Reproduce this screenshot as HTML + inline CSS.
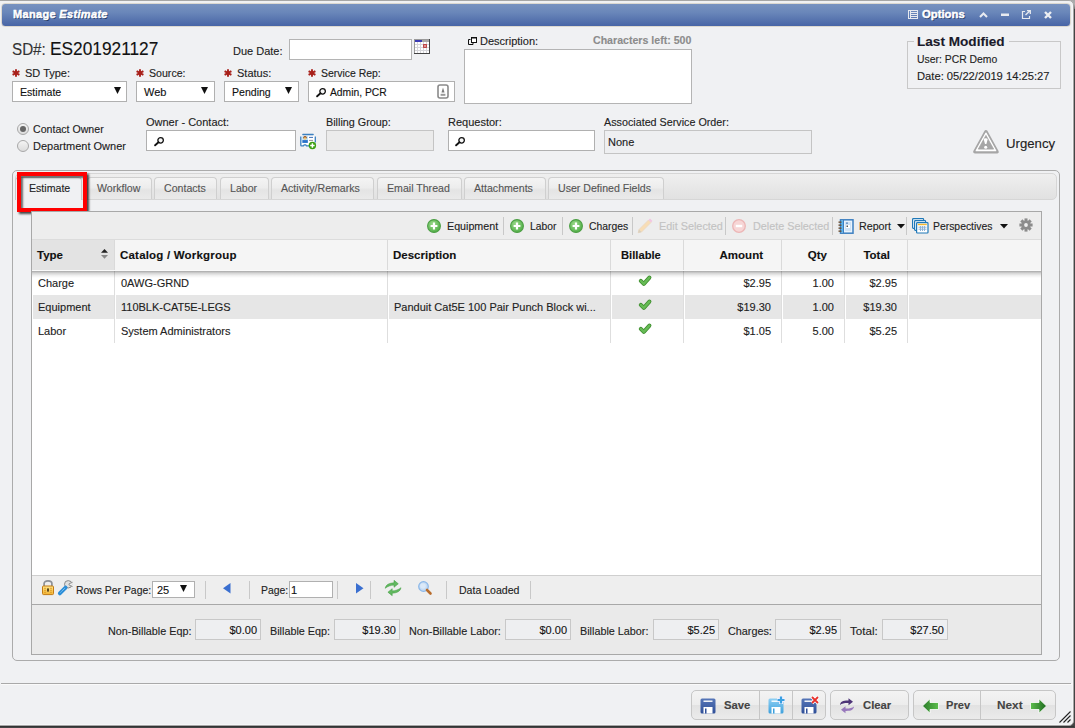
<!DOCTYPE html>
<html><head><meta charset="utf-8"><title>Manage Estimate</title>
<style>
*{margin:0;padding:0;box-sizing:border-box}
html,body{width:1075px;height:728px;overflow:hidden;background:#454545;font-family:"Liberation Sans", sans-serif}
.a{position:absolute}
.t{white-space:nowrap;-webkit-text-stroke:0.12px currentColor}
svg{position:absolute;overflow:visible}
</style></head>
<body>
<div class="a" style="left:1066px;top:0px;width:9px;height:12px;background:linear-gradient(#a9a9a9, #b0b0b0 35%, #444 100%)"></div>
<div class="a" style="left:-6px;top:0px;width:1080px;height:726px;background:#f0f1f3;border:1px solid #a6a6a6;border-radius:5px;box-shadow:inset -1px -1px 0 #f6f7f8"></div>
<div class="a" style="left:0px;top:726px;width:1075px;height:1px;background:#333"></div>
<div class="a" style="left:1074px;top:9px;width:1px;height:719px;background:#444"></div>
<div class="a" style="left:1px;top:3px;width:1070px;height:24px;border-radius:4px;background:linear-gradient(#7892c0,#6986b9 40%,#4865a6);border:1px solid #dcd8d0"></div>
<div class="a t" style="left:13px;top:4px;font-size:11px;line-height:20px;color:#fff;font-weight:bold;text-shadow:1px 1px 0.5px #223a66;letter-spacing:0.33px;-webkit-text-stroke:0.45px #fff;">Manage <i>Estimate</i></div>
<div class="a t" style="left:12px;top:40px;font-size:16px;line-height:20px;color:#333;transform:scaleX(0.95);transform-origin:0 0;">SD#:</div>
<div class="a t" style="left:50px;top:39px;font-size:19px;line-height:20px;color:#111;transform:scaleX(0.91);transform-origin:0 0;">ES201921127</div>
<div class="a t" style="left:233px;top:41px;font-size:11px;line-height:20px;color:#222;">Due Date:</div>
<div class="a" style="left:289px;top:39px;width:123px;height:21px;background:#fff;border:1px solid #b4b4b4"></div>
<svg style="left:12px;top:69px" width="8" height="8" viewBox="0 0 8 8"><path d="M4 0.3V7.7M0.6 2.1L7.4 5.9M0.6 5.9L7.4 2.1" stroke="#a8201a" stroke-width="1.9"/></svg>
<div class="a t" style="left:25px;top:63px;font-size:11px;line-height:20px;color:#222;">SD Type:</div>
<svg style="left:136px;top:69px" width="8" height="8" viewBox="0 0 8 8"><path d="M4 0.3V7.7M0.6 2.1L7.4 5.9M0.6 5.9L7.4 2.1" stroke="#a8201a" stroke-width="1.9"/></svg>
<div class="a t" style="left:149px;top:63px;font-size:10.6px;line-height:20px;color:#222;">Source:</div>
<svg style="left:224px;top:69px" width="8" height="8" viewBox="0 0 8 8"><path d="M4 0.3V7.7M0.6 2.1L7.4 5.9M0.6 5.9L7.4 2.1" stroke="#a8201a" stroke-width="1.9"/></svg>
<div class="a t" style="left:237px;top:63px;font-size:11px;line-height:20px;color:#222;">Status:</div>
<svg style="left:308px;top:69px" width="8" height="8" viewBox="0 0 8 8"><path d="M4 0.3V7.7M0.6 2.1L7.4 5.9M0.6 5.9L7.4 2.1" stroke="#a8201a" stroke-width="1.9"/></svg>
<div class="a t" style="left:321px;top:64px;font-size:10.45px;line-height:20px;color:#222;">Service Rep:</div>
<div class="a" style="left:12px;top:81px;width:115px;height:21px;background:#fff;border:1px solid #b0b0b0"></div>
<div class="a t" style="left:20px;top:82px;font-size:10.6px;line-height:20px;color:#111;">Estimate</div>
<div class="a" style="left:136px;top:81px;width:79px;height:21px;background:#fff;border:1px solid #b0b0b0"></div>
<div class="a t" style="left:144px;top:82px;font-size:11px;line-height:20px;color:#111;">Web</div>
<div class="a" style="left:224px;top:81px;width:75px;height:21px;background:#fff;border:1px solid #b0b0b0"></div>
<div class="a t" style="left:232px;top:82px;font-size:10.55px;line-height:20px;color:#111;">Pending</div>
<svg style="left:114px;top:87px" width="7" height="7"><path d="M0 0H7L3.5 7Z" fill="#111"/></svg>
<svg style="left:201px;top:87px" width="7" height="7"><path d="M0 0H7L3.5 7Z" fill="#111"/></svg>
<svg style="left:285px;top:87px" width="7" height="7"><path d="M0 0H7L3.5 7Z" fill="#111"/></svg>
<div class="a" style="left:308px;top:81px;width:147px;height:21px;background:#fff;border:1px solid #b0b0b0"></div>
<div class="a t" style="left:330px;top:83px;font-size:10.3px;line-height:20px;color:#111;">Admin, PCR</div>
<div class="a t" style="left:480px;top:31px;font-size:11px;line-height:20px;color:#222;">Description:</div>
<div class="a t" style="left:593px;top:30px;font-size:10.6px;line-height:20px;color:#8c8c8c;font-weight:bold;">Characters left: 500</div>
<div class="a" style="left:464px;top:49px;width:228px;height:55px;background:#fff;border:1px solid #b4b4b4"></div>
<div class="a" style="left:907px;top:41px;width:154px;height:48px;border:1px solid #c8c8c8"></div>
<div class="a" style="left:914px;top:34px;width:95px;height:12px;background:#f0f1f3"></div>
<div class="a t" style="left:917px;top:32px;font-size:13.6px;line-height:20px;color:#1a1a2a;font-weight:bold;">Last Modified</div>
<div class="a t" style="left:917px;top:50px;font-size:10.4px;line-height:20px;color:#222;">User: PCR Demo</div>
<div class="a t" style="left:917px;top:66px;font-size:11.2px;line-height:20px;color:#222;">Date: 05/22/2019 14:25:27</div>
<div class="a" style="left:17px;top:123px;width:12px;height:12px;border-radius:50%;border:1px solid #a8a8a8;background:linear-gradient(#f4f4f4,#dcdcdc)"></div>
<div class="a" style="left:17px;top:140px;width:12px;height:12px;border-radius:50%;border:1px solid #a8a8a8;background:linear-gradient(#f4f4f4,#dcdcdc)"></div>
<div class="a" style="left:20px;top:126px;width:6px;height:6px;border-radius:50%;background:#666"></div>
<div class="a t" style="left:33px;top:119px;font-size:10.6px;line-height:20px;color:#222;">Contact Owner</div>
<div class="a t" style="left:33px;top:136px;font-size:11px;line-height:20px;color:#222;">Department Owner</div>
<div class="a t" style="left:146px;top:112px;font-size:11px;line-height:20px;color:#222;">Owner - Contact:</div>
<div class="a" style="left:146px;top:130px;width:150px;height:21px;background:#fff;border:1px solid #b0b0b0"></div>
<div class="a t" style="left:326px;top:112px;font-size:10.8px;line-height:20px;color:#222;">Billing Group:</div>
<div class="a" style="left:326px;top:130px;width:108px;height:21px;background:#ebebeb;border:1px solid #c4c4c4"></div>
<div class="a t" style="left:448px;top:112px;font-size:11px;line-height:20px;color:#222;">Requestor:</div>
<div class="a" style="left:448px;top:130px;width:147px;height:21px;background:#fff;border:1px solid #b0b0b0"></div>
<div class="a t" style="left:604px;top:112px;font-size:10.75px;line-height:20px;color:#222;">Associated Service Order:</div>
<div class="a" style="left:604px;top:130px;width:208px;height:24px;background:#eeeff1;border:1px solid #c4c4c4"></div>
<div class="a t" style="left:608px;top:132px;font-size:11px;line-height:20px;color:#222;">None</div>
<div class="a t" style="left:1006px;top:134px;font-size:13.2px;line-height:20px;color:#222;">Urgency</div>
<div class="a" style="left:12px;top:170px;width:1048px;height:491px;border:1px solid #ababab;border-radius:5px"></div>
<div class="a" style="left:15px;top:173px;width:1042px;height:27px;border:1px solid #d6d6d6;border-radius:5px;background:linear-gradient(#efefef,#e1e1e1)"></div>
<div class="a" style="left:15px;top:177px;width:67px;height:23px;background:#f0f1f3;border:1px solid #c8c8c8;border-bottom:none;border-radius:4px 4px 0 0"></div>
<div class="a t" style="left:29px;top:178px;font-size:10.6px;line-height:20px;color:#222;">Estimate</div>
<div class="a" style="left:87px;top:177px;width:65px;height:22px;background:linear-gradient(#f4f4f4,#ededed 45%,#e4e4e4 58%,#eaeaea);border:1px solid #cfcfcf;border-bottom:none;border-radius:4px 4px 0 0"></div>
<div class="a t" style="left:97px;top:178px;font-size:10.6px;line-height:20px;color:#555;">Workflow</div>
<div class="a" style="left:154px;top:177px;width:63px;height:22px;background:linear-gradient(#f4f4f4,#ededed 45%,#e4e4e4 58%,#eaeaea);border:1px solid #cfcfcf;border-bottom:none;border-radius:4px 4px 0 0"></div>
<div class="a t" style="left:164px;top:178px;font-size:10.6px;line-height:20px;color:#555;">Contacts</div>
<div class="a" style="left:220px;top:177px;width:49px;height:22px;background:linear-gradient(#f4f4f4,#ededed 45%,#e4e4e4 58%,#eaeaea);border:1px solid #cfcfcf;border-bottom:none;border-radius:4px 4px 0 0"></div>
<div class="a t" style="left:230px;top:178px;font-size:10.6px;line-height:20px;color:#555;">Labor</div>
<div class="a" style="left:271px;top:177px;width:103px;height:22px;background:linear-gradient(#f4f4f4,#ededed 45%,#e4e4e4 58%,#eaeaea);border:1px solid #cfcfcf;border-bottom:none;border-radius:4px 4px 0 0"></div>
<div class="a t" style="left:281px;top:178px;font-size:10.6px;line-height:20px;color:#555;">Activity/Remarks</div>
<div class="a" style="left:377px;top:177px;width:85px;height:22px;background:linear-gradient(#f4f4f4,#ededed 45%,#e4e4e4 58%,#eaeaea);border:1px solid #cfcfcf;border-bottom:none;border-radius:4px 4px 0 0"></div>
<div class="a t" style="left:387px;top:178px;font-size:10.6px;line-height:20px;color:#555;">Email Thread</div>
<div class="a" style="left:464px;top:177px;width:82px;height:22px;background:linear-gradient(#f4f4f4,#ededed 45%,#e4e4e4 58%,#eaeaea);border:1px solid #cfcfcf;border-bottom:none;border-radius:4px 4px 0 0"></div>
<div class="a t" style="left:474px;top:178px;font-size:10.6px;line-height:20px;color:#555;">Attachments</div>
<div class="a" style="left:548px;top:177px;width:116px;height:22px;background:linear-gradient(#f4f4f4,#ededed 45%,#e4e4e4 58%,#eaeaea);border:1px solid #cfcfcf;border-bottom:none;border-radius:4px 4px 0 0"></div>
<div class="a t" style="left:558px;top:178px;font-size:10.6px;line-height:20px;color:#555;">User Defined Fields</div>
<div class="a" style="left:31px;top:211px;width:1011px;height:1px;background:#a8a8a8"></div>
<div class="a" style="left:17px;top:172px;width:70px;height:40px;border:4px solid #f00;box-shadow:2px 2px 2px rgba(0,0,0,.7), inset 2px 2px 2px rgba(0,0,0,.55)"></div>
<div class="a" style="left:31px;top:211px;width:1011px;height:444px;border:1px solid #a8a8a8;border-top:1px solid #a8a8a8;background:#fff"></div>
<div class="a" style="left:32px;top:212px;width:1009px;height:28px;background:#ededed"></div>
<div class="a" style="left:32px;top:239px;width:1009px;height:1px;background:#dcdcdc"></div>
<div class="a t" style="left:447px;top:216px;font-size:10.7px;line-height:20px;color:#222;">Equipment</div>
<div class="a t" style="left:530px;top:217px;font-size:10.3px;line-height:20px;color:#222;">Labor</div>
<div class="a t" style="left:589px;top:217px;font-size:10.35px;line-height:20px;color:#222;">Charges</div>
<div class="a t" style="left:659px;top:216px;font-size:10.85px;line-height:20px;color:#c2c2c2;">Edit Selected</div>
<div class="a t" style="left:753px;top:216px;font-size:10.8px;line-height:20px;color:#c2c2c2;">Delete Selected</div>
<div class="a t" style="left:859px;top:216px;font-size:10.7px;line-height:20px;color:#222;">Report</div>
<div class="a t" style="left:933px;top:217px;font-size:10.4px;line-height:20px;color:#222;">Perspectives</div>
<div class="a" style="left:503px;top:217px;width:1px;height:18px;background:#c8c8c8"></div>
<div class="a" style="left:562px;top:217px;width:1px;height:18px;background:#c8c8c8"></div>
<div class="a" style="left:632px;top:217px;width:1px;height:18px;background:#c8c8c8"></div>
<div class="a" style="left:725px;top:217px;width:1px;height:18px;background:#c8c8c8"></div>
<div class="a" style="left:832px;top:217px;width:1px;height:18px;background:#c8c8c8"></div>
<div class="a" style="left:906px;top:217px;width:1px;height:18px;background:#c8c8c8"></div>
<svg style="left:427px;top:219px" width="15" height="15" viewBox="0 0 15 15"><defs><radialGradient id="pg427" cx="0.4" cy="0.35" r="0.7"><stop offset="0" stop-color="#9ad88a"/><stop offset="1" stop-color="#4fae45"/></radialGradient></defs><circle cx="7" cy="7" r="6.4" fill="url(#pg427)" stroke="#4c9e44" stroke-width="1.1"/><path d="M7 3.6V10.4M3.6 7H10.4" stroke="#fff" stroke-width="2.2"/></svg>
<svg style="left:510px;top:219px" width="15" height="15" viewBox="0 0 15 15"><defs><radialGradient id="pg510" cx="0.4" cy="0.35" r="0.7"><stop offset="0" stop-color="#9ad88a"/><stop offset="1" stop-color="#4fae45"/></radialGradient></defs><circle cx="7" cy="7" r="6.4" fill="url(#pg510)" stroke="#4c9e44" stroke-width="1.1"/><path d="M7 3.6V10.4M3.6 7H10.4" stroke="#fff" stroke-width="2.2"/></svg>
<svg style="left:569px;top:219px" width="15" height="15" viewBox="0 0 15 15"><defs><radialGradient id="pg569" cx="0.4" cy="0.35" r="0.7"><stop offset="0" stop-color="#9ad88a"/><stop offset="1" stop-color="#4fae45"/></radialGradient></defs><circle cx="7" cy="7" r="6.4" fill="url(#pg569)" stroke="#4c9e44" stroke-width="1.1"/><path d="M7 3.6V10.4M3.6 7H10.4" stroke="#fff" stroke-width="2.2"/></svg>
<svg style="left:732px;top:219px" width="15" height="15"><circle cx="7" cy="7" r="6.3" fill="#f7d6d6" stroke="#ecb6b6" stroke-width="1.3"/><path d="M3.8 7H10.2" stroke="#fff" stroke-width="2.4"/></svg>
<svg style="left:897px;top:224px" width="8" height="5"><path d="M0 0H8L4 4.5Z" fill="#111"/></svg>
<svg style="left:1000px;top:224px" width="8" height="5"><path d="M0 0H8L4 4.5Z" fill="#111"/></svg>
<div class="a" style="left:32px;top:240px;width:1009px;height:31px;background:#f5f5f5"></div>
<div class="a" style="left:32px;top:240px;width:83px;height:31px;background:#e3e3e3"></div>
<div class="a" style="left:114px;top:240px;width:1px;height:31px;background:#dadada"></div>
<div class="a" style="left:387px;top:240px;width:1px;height:31px;background:#dadada"></div>
<div class="a" style="left:610px;top:240px;width:1px;height:31px;background:#dadada"></div>
<div class="a" style="left:683px;top:240px;width:1px;height:31px;background:#dadada"></div>
<div class="a" style="left:781px;top:240px;width:1px;height:31px;background:#dadada"></div>
<div class="a" style="left:844px;top:240px;width:1px;height:31px;background:#dadada"></div>
<div class="a" style="left:907px;top:240px;width:1px;height:31px;background:#dadada"></div>
<div class="a t" style="left:37px;top:245px;font-size:11.5px;line-height:20px;color:#111;font-weight:bold;">Type</div>
<div class="a t" style="left:120px;top:245px;font-size:11.5px;line-height:20px;color:#111;font-weight:bold;letter-spacing:0.2px;">Catalog / Workgroup</div>
<div class="a t" style="left:393px;top:245px;font-size:11.5px;line-height:20px;color:#111;font-weight:bold;">Description</div>
<div class="a t" style="left:621px;top:245px;font-size:11.2px;line-height:20px;color:#111;font-weight:bold;">Billable</div>
<div class="a t" style="left:683px;top:245px;width:80px;text-align:right;font-size:11.5px;line-height:20px;color:#111;font-weight:bold;">Amount</div>
<div class="a t" style="left:787px;top:245px;width:40px;text-align:right;font-size:11.5px;line-height:20px;color:#111;font-weight:bold;">Qty</div>
<div class="a t" style="left:850px;top:245px;width:40px;text-align:right;font-size:11.5px;line-height:20px;color:#111;font-weight:bold;">Total</div>
<div class="a t" style="left:38px;top:273px;font-size:11px;line-height:20px;color:#222;">Charge</div>
<div class="a t" style="left:121px;top:273px;font-size:11px;line-height:20px;color:#222;">0AWG-GRND</div>
<div class="a t" style="left:394px;top:273px;font-size:11px;line-height:20px;color:#222;"></div>
<div class="a t" style="left:691px;top:273px;width:80px;text-align:right;font-size:11px;line-height:20px;color:#222;">$2.95</div>
<div class="a t" style="left:794px;top:273px;width:40px;text-align:right;font-size:11px;line-height:20px;color:#222;">1.00</div>
<div class="a t" style="left:837px;top:273px;width:60px;text-align:right;font-size:11px;line-height:20px;color:#222;">$2.95</div>
<div class="a" style="left:33px;top:295px;width:81px;height:24px;background:#e6e6e6"></div>
<div class="a" style="left:116px;top:295px;width:271px;height:24px;background:#e6e6e6"></div>
<div class="a" style="left:389px;top:295px;width:221px;height:24px;background:#e6e6e6"></div>
<div class="a" style="left:612px;top:295px;width:71px;height:24px;background:#e6e6e6"></div>
<div class="a" style="left:685px;top:295px;width:96px;height:24px;background:#e6e6e6"></div>
<div class="a" style="left:783px;top:295px;width:61px;height:24px;background:#e6e6e6"></div>
<div class="a" style="left:846px;top:295px;width:61px;height:24px;background:#e6e6e6"></div>
<div class="a" style="left:909px;top:295px;width:132px;height:24px;background:#e6e6e6"></div>
<div class="a t" style="left:38px;top:297px;font-size:11px;line-height:20px;color:#222;">Equipment</div>
<div class="a t" style="left:121px;top:297px;font-size:11px;line-height:20px;color:#222;">110BLK-CAT5E-LEGS</div>
<div class="a t" style="left:394px;top:297px;font-size:11px;line-height:20px;color:#222;">Panduit Cat5E 100 Pair Punch Block wi...</div>
<div class="a t" style="left:691px;top:297px;width:80px;text-align:right;font-size:11px;line-height:20px;color:#222;">$19.30</div>
<div class="a t" style="left:794px;top:297px;width:40px;text-align:right;font-size:11px;line-height:20px;color:#222;">1.00</div>
<div class="a t" style="left:837px;top:297px;width:60px;text-align:right;font-size:11px;line-height:20px;color:#222;">$19.30</div>
<div class="a t" style="left:38px;top:321px;font-size:11px;line-height:20px;color:#222;">Labor</div>
<div class="a t" style="left:121px;top:321px;font-size:11px;line-height:20px;color:#222;">System Administrators</div>
<div class="a t" style="left:394px;top:321px;font-size:11px;line-height:20px;color:#222;"></div>
<div class="a t" style="left:691px;top:321px;width:80px;text-align:right;font-size:11px;line-height:20px;color:#222;">$1.05</div>
<div class="a t" style="left:794px;top:321px;width:40px;text-align:right;font-size:11px;line-height:20px;color:#222;">5.00</div>
<div class="a t" style="left:837px;top:321px;width:60px;text-align:right;font-size:11px;line-height:20px;color:#222;">$5.25</div>
<div class="a" style="left:114px;top:271px;width:1px;height:72px;background:#dedede"></div>
<div class="a" style="left:387px;top:271px;width:1px;height:72px;background:#dedede"></div>
<div class="a" style="left:610px;top:271px;width:1px;height:72px;background:#dedede"></div>
<div class="a" style="left:683px;top:271px;width:1px;height:72px;background:#dedede"></div>
<div class="a" style="left:781px;top:271px;width:1px;height:72px;background:#dedede"></div>
<div class="a" style="left:844px;top:271px;width:1px;height:72px;background:#dedede"></div>
<div class="a" style="left:907px;top:271px;width:1px;height:72px;background:#dedede"></div>
<div class="a" style="left:32px;top:270px;width:1009px;height:1px;background:#fafafa"></div>
<div class="a" style="left:32px;top:271px;width:1009px;height:7px;background:linear-gradient(rgba(0,0,0,.34), rgba(0,0,0,.17) 30%, rgba(0,0,0,.06) 65%, rgba(0,0,0,0))"></div>
<div class="a" style="left:32px;top:575px;width:1009px;height:30px;background:#eeeeee;border-top:1px solid #cfcfcf;border-bottom:1px solid #a8a8a8"></div>
<div class="a t" style="left:76px;top:581px;font-size:10.4px;line-height:20px;color:#222;">Rows Per Page:</div>
<div class="a" style="left:152px;top:581px;width:43px;height:17px;background:#fff;border:1px solid #b0b0b0"></div>
<div class="a t" style="left:157px;top:580px;font-size:11px;line-height:20px;color:#111;">25</div>
<svg style="left:180px;top:585px" width="7" height="7"><path d="M0 0H7L3.5 7Z" fill="#111"/></svg>
<div class="a" style="left:205px;top:581px;width:1px;height:18px;background:#c8c8c8"></div>
<div class="a" style="left:249px;top:581px;width:1px;height:18px;background:#c8c8c8"></div>
<div class="a" style="left:337px;top:581px;width:1px;height:18px;background:#c8c8c8"></div>
<div class="a" style="left:370px;top:581px;width:1px;height:18px;background:#c8c8c8"></div>
<div class="a" style="left:446px;top:581px;width:1px;height:18px;background:#c8c8c8"></div>
<div class="a" style="left:530px;top:581px;width:1px;height:18px;background:#c8c8c8"></div>
<div class="a t" style="left:261px;top:581px;font-size:10.4px;line-height:20px;color:#222;">Page:</div>
<div class="a" style="left:289px;top:581px;width:44px;height:17px;background:#fff;border:1px solid #b0b0b0"></div>
<div class="a t" style="left:291px;top:580px;font-size:11px;line-height:20px;color:#111;">1</div>
<div class="a t" style="left:459px;top:580px;font-size:10.55px;line-height:20px;color:#222;">Data Loaded</div>
<svg style="left:223px;top:583px" width="8" height="11"><path d="M7.5 0V10.5L0 5.25Z" fill="#3a6fd0"/></svg>
<svg style="left:356px;top:583px" width="8" height="11"><path d="M0 0V10.5L7.5 5.25Z" fill="#3a6fd0"/></svg>
<div class="a" style="left:32px;top:605px;width:1009px;height:49px;background:#eaeaea"></div>
<div class="a t" style="left:108px;top:621px;font-size:10.8px;line-height:20px;color:#222;">Non-Billable Eqp:</div>
<div class="a" style="left:195px;top:619px;width:66px;height:21px;background:#eeeff1;border:1px solid #c8c8c8"></div>
<div class="a t" style="left:197px;top:620px;width:60px;text-align:right;font-size:11px;line-height:20px;color:#111;">$0.00</div>
<div class="a t" style="left:270px;top:621px;font-size:10.8px;line-height:20px;color:#222;">Billable Eqp:</div>
<div class="a" style="left:334px;top:619px;width:66px;height:21px;background:#eeeff1;border:1px solid #c8c8c8"></div>
<div class="a t" style="left:336px;top:620px;width:60px;text-align:right;font-size:11px;line-height:20px;color:#111;">$19.30</div>
<div class="a t" style="left:409px;top:621px;font-size:10.8px;line-height:20px;color:#222;">Non-Billable Labor:</div>
<div class="a" style="left:505px;top:619px;width:66px;height:21px;background:#eeeff1;border:1px solid #c8c8c8"></div>
<div class="a t" style="left:507px;top:620px;width:60px;text-align:right;font-size:11px;line-height:20px;color:#111;">$0.00</div>
<div class="a t" style="left:580px;top:621px;font-size:10.8px;line-height:20px;color:#222;">Billable Labor:</div>
<div class="a" style="left:653px;top:619px;width:66px;height:21px;background:#eeeff1;border:1px solid #c8c8c8"></div>
<div class="a t" style="left:655px;top:620px;width:60px;text-align:right;font-size:11px;line-height:20px;color:#111;">$5.25</div>
<div class="a t" style="left:728px;top:621px;font-size:10.8px;line-height:20px;color:#222;">Charges:</div>
<div class="a" style="left:775px;top:619px;width:66px;height:21px;background:#eeeff1;border:1px solid #c8c8c8"></div>
<div class="a t" style="left:777px;top:620px;width:60px;text-align:right;font-size:11px;line-height:20px;color:#111;">$2.95</div>
<div class="a t" style="left:850px;top:621px;font-size:11.6px;line-height:20px;color:#222;">Total:</div>
<div class="a" style="left:882px;top:619px;width:66px;height:21px;background:#eeeff1;border:1px solid #c8c8c8"></div>
<div class="a t" style="left:884px;top:620px;width:60px;text-align:right;font-size:11px;line-height:20px;color:#111;">$27.50</div>
<div class="a" style="left:1px;top:683px;width:1070px;height:1px;background:#a9a9a9"></div>
<div class="a" style="left:1px;top:684px;width:1071px;height:1px;background:#fafafa"></div>
<div class="a" style="left:691px;top:690px;width:135px;height:30px;border:1px solid #c6c6c6;border-radius:5px;background:linear-gradient(#f3f3f3 0%,#ececec 50%,#e2e2e2 51%,#ebebeb 100%)"></div>
<div class="a" style="left:759px;top:691px;width:1px;height:28px;background:#c6c6c6"></div>
<div class="a" style="left:792px;top:691px;width:1px;height:28px;background:#c6c6c6"></div>
<div class="a" style="left:830px;top:690px;width:79px;height:30px;border:1px solid #c6c6c6;border-radius:5px;background:linear-gradient(#f3f3f3 0%,#ececec 50%,#e2e2e2 51%,#ebebeb 100%)"></div>
<div class="a" style="left:913px;top:690px;width:143px;height:30px;border:1px solid #c6c6c6;border-radius:5px;background:linear-gradient(#f3f3f3 0%,#ececec 50%,#e2e2e2 51%,#ebebeb 100%)"></div>
<div class="a" style="left:980px;top:691px;width:1px;height:28px;background:#c6c6c6"></div>
<div class="a t" style="left:724px;top:695px;font-size:11.3px;line-height:20px;color:#444;font-weight:bold;">Save</div>
<div class="a t" style="left:863px;top:695px;font-size:11.3px;line-height:20px;color:#444;font-weight:bold;">Clear</div>
<div class="a t" style="left:946px;top:695px;font-size:11.1px;line-height:20px;color:#444;font-weight:bold;">Prev</div>
<div class="a t" style="left:997px;top:695px;font-size:11.8px;line-height:20px;color:#444;font-weight:bold;">Next</div>
<div class="a t" style="left:922px;top:4px;font-size:11.3px;line-height:20px;color:#fff;font-weight:bold;text-shadow:1px 1px 0.5px #223a66;-webkit-text-stroke:0.45px #fff;">Options</div>
<svg style="left:908px;top:10px;" width="10" height="9" viewBox="0 0 10 9"><rect x="0.5" y="0.5" width="9" height="8" fill="none" stroke="#e6e9ef"/><path d="M2.5 1V8M3 2.5H9M3 4.5H9M3 6.5H9" stroke="#e6e9ef" stroke-width="1"/></svg>
<svg style="left:979px;top:12px;" width="9" height="6" viewBox="0 0 9 6"><path d="M1 5L4.5 1.5L8 5" stroke="#e8ebf0" stroke-width="2" fill="none"/></svg>
<svg style="left:1001px;top:13px;" width="8" height="4" viewBox="0 0 8 4"><rect x="0" y="0.5" width="8" height="2.5" fill="#e8ebf0"/></svg>
<svg style="left:1021px;top:10px;" width="10" height="9" viewBox="0 0 10 9"><path d="M4 1.5H1.5V8.5H8.5V6" stroke="#e8ebf0" stroke-width="1.2" fill="none"/><path d="M4.5 5L9 0.8M6 0.7H9.3V4" stroke="#e8ebf0" stroke-width="1.3" fill="none"/></svg>
<svg style="left:1044px;top:11px;" width="8" height="8" viewBox="0 0 8 8"><path d="M1 1L7 7M7 1L1 7" stroke="#eceef2" stroke-width="2.4"/></svg>
<svg style="left:414px;top:39px;" width="16" height="15" viewBox="0 0 16 15"><rect x="0" y="0" width="16" height="15" fill="#d4d4d8"/><rect x="0" y="0" width="15" height="14" fill="#9a9a9a"/><rect x="1" y="1" width="14" height="13" fill="#d6d6da"/><rect x="1" y="1" width="7" height="2" fill="#3b3bb5"/><rect x="8" y="1" width="7" height="2" fill="#a8a8a8"/><rect x="1" y="3" width="2" height="2" fill="#fff"/><rect x="1" y="6" width="2" height="2" fill="#fff"/><rect x="1" y="9" width="2" height="2" fill="#fff"/><rect x="1" y="12" width="2" height="2" fill="#fff"/><rect x="4" y="3" width="2" height="2" fill="#fff"/><rect x="4" y="6" width="2" height="2" fill="#fff"/><rect x="4" y="9" width="2" height="2" fill="#fff"/><rect x="4" y="12" width="2" height="2" fill="#fff"/><rect x="7" y="3" width="2" height="2" fill="#fff"/><rect x="7" y="6" width="2" height="2" fill="#fff"/><rect x="7" y="9" width="2" height="2" fill="#fff"/><rect x="7" y="12" width="2" height="2" fill="#fff"/><rect x="10" y="3" width="2" height="2" fill="#fff"/><rect x="10" y="6" width="2" height="2" fill="#fff"/><rect x="10" y="9" width="2" height="2" fill="#fff"/><rect x="10" y="12" width="2" height="2" fill="#fff"/><rect x="13" y="3" width="2" height="2" fill="#fff"/><rect x="13" y="6" width="2" height="2" fill="#fff"/><rect x="13" y="9" width="2" height="2" fill="#fff"/><rect x="13" y="12" width="2" height="2" fill="#fff"/><rect x="9.7" y="5.7" width="2.6" height="2.6" fill="#fff" stroke="#b33" stroke-width="1.2"/><rect x="15" y="0" width="1" height="15" fill="#444"/><rect x="0" y="14" width="16" height="1" fill="#444"/></svg>
<svg style="left:316px;top:87px;" width="11" height="10" viewBox="0 0 11 10"><circle cx="6.6" cy="4.3" r="2.75" fill="#f6f6f6" stroke="#111" stroke-width="1.3"/><path d="M1.1 9.3L4.5 6.3" stroke="#111" stroke-width="1.9" stroke-linecap="round"/></svg>
<svg style="left:154px;top:136px;" width="11" height="10" viewBox="0 0 11 10"><circle cx="6.6" cy="4.3" r="2.75" fill="#f6f6f6" stroke="#111" stroke-width="1.3"/><path d="M1.1 9.3L4.5 6.3" stroke="#111" stroke-width="1.9" stroke-linecap="round"/></svg>
<svg style="left:455px;top:136px;" width="11" height="10" viewBox="0 0 11 10"><circle cx="6.6" cy="4.3" r="2.75" fill="#f6f6f6" stroke="#111" stroke-width="1.3"/><path d="M1.1 9.3L4.5 6.3" stroke="#111" stroke-width="1.9" stroke-linecap="round"/></svg>
<svg style="left:437px;top:84px;" width="12" height="15" viewBox="0 0 12 15"><rect x="1" y="1" width="10" height="13" rx="2" fill="#fff" stroke="#8a8a8a" stroke-width="1.6"/><path d="M6 3.5L7.5 8.5H4.5Z" fill="#7a7a7a"/><rect x="3.6" y="9.8" width="4.8" height="2" fill="#9a9a9a"/></svg>
<svg style="left:468px;top:37px;" width="9" height="8" viewBox="0 0 9 8"><path d="M2.5 2.5H0.5V7.5H5V6" stroke="#111" stroke-width="1" fill="none"/><rect x="3.5" y="0.5" width="5" height="5" fill="#fff" stroke="#111" stroke-width="1"/><rect x="3" y="0" width="6" height="1.5" fill="#111"/></svg>
<svg style="left:300px;top:133px;" width="17" height="17" viewBox="0 0 17 17"><rect x="1.4" y="3" width="13.4" height="9.6" fill="#fff"/><rect x="2.2" y="0.8" width="11.6" height="1.4" rx="0.7" fill="#3a80c0"/><path d="M0.8 3.4V12.3Q0.8 12.9 1.5 12.9H3.4L4.2 11.9H5.7L6.5 12.9H9.5M15.3 3.4V9.5" stroke="#3a80c0" stroke-width="1.3" fill="none"/><rect x="2.2" y="3.1" width="5.8" height="6.8" fill="#bfe3fa"/><circle cx="5" cy="4.6" r="1.7" fill="#9a4a10"/><ellipse cx="5" cy="5.5" rx="1.2" ry="1.3" fill="#f2c878"/><rect x="2.4" y="7.1" width="5.4" height="2.8" fill="#2a70c8"/><rect x="9" y="3.9" width="4" height="0.9" fill="#2a60b0"/><rect x="9" y="6.9" width="4" height="0.9" fill="#888"/><circle cx="12.4" cy="12.5" r="3.7" fill="#3a9e12"/><path d="M12.4 10.3V14.7M10.2 12.5H14.6" stroke="#fff" stroke-width="1.5"/></svg>
<svg style="left:972px;top:129px;" width="28" height="26" viewBox="0 0 28 26"><path d="M13.95 2.9L24.97 22.8H2.93Z" fill="#a6a6a6" stroke="#a6a6a6" stroke-width="3.6" stroke-linejoin="round"/><path d="M13.95 4.1L23.75 21.7H4.15Z" fill="#fff" stroke="#fff" stroke-width="1.2" stroke-linejoin="round"/><path d="M13.95 6.4L21.6 20.1H6.3Z" fill="#a6a6a6" stroke="#a6a6a6" stroke-width="0.8" stroke-linejoin="round"/><path d="M11.8 10.6Q11.8 9.3 13.7 9.3Q15.6 9.3 15.6 10.6L14.4 14.9H13Z" fill="#fff"/><circle cx="13.7" cy="18.2" r="1.55" fill="#fff"/></svg>
<svg style="left:101px;top:249px;" width="8" height="10" viewBox="0 0 8 10"><path d="M0 3.8L3.5 0L7 3.8Z" fill="#222"/><path d="M0 6L3.5 9.8L7 6Z" fill="#8a8a8a"/></svg>
<svg style="left:637px;top:218px;" width="17" height="16" viewBox="0 0 17 16"><path d="M2 11.5L11.5 2L14 4.5L4.5 14L1.2 14.8Z" fill="#f8ddb5" stroke="#ead7c2" stroke-width="0.8"/><path d="M11.5 2L13 0.6L15.5 3L14 4.5Z" fill="#f2c6e2"/><path d="M1.2 14.8L2 11.5L4.5 14Z" fill="#d8d0c0"/></svg>
<svg style="left:838px;top:219px;" width="16" height="15" viewBox="0 0 16 15"><rect x="2.5" y="0.8" width="12.5" height="13.4" fill="#e9f3fc" stroke="#3d7fc0" stroke-width="1.5"/><rect x="3" y="1.5" width="2" height="12" fill="#5cb4ee"/><rect x="5" y="1" width="1" height="13" fill="#3d7fc0"/><rect x="7" y="3" width="6" height="9" fill="#cfe3f6"/><rect x="8" y="6" width="4" height="3" fill="#fff"/><rect x="8.5" y="6.5" width="1.5" height="1.5" fill="#555"/><rect x="8" y="3.6" width="2" height="1" fill="#3a6fb0"/><rect x="0.5" y="2.5" width="3" height="1.3" fill="#6b4a2a"/><rect x="0.5" y="5.5" width="3" height="1.3" fill="#6b4a2a"/><rect x="0.5" y="8.5" width="3" height="1.3" fill="#6b4a2a"/><rect x="0.5" y="11.5" width="3" height="1.3" fill="#6b4a2a"/></svg>
<svg style="left:912px;top:218px;" width="17" height="16" viewBox="0 0 17 16"><rect x="0.6" y="0.6" width="11" height="9.8" rx="0.8" fill="#fff" stroke="#1f78b8" stroke-width="1.2"/><rect x="2.6" y="2.6" width="11" height="9.8" rx="0.8" fill="#fff" stroke="#1f78b8" stroke-width="1.2"/><rect x="4.6" y="4.6" width="11.4" height="10.4" rx="0.8" fill="#fff" stroke="#1f78b8" stroke-width="1.2"/><rect x="5.8" y="5.8" width="9" height="1.4" fill="#f4b830"/><path d="M6.5 9.2H14.5M6.5 11.2H14.5M8.5 8V13M10.5 8V13M12.5 8V13" stroke="#8fb3d6" stroke-width="1"/></svg>
<svg style="left:1019px;top:218px;" width="14" height="14" viewBox="0 0 14 14"><g transform="translate(7 7)" fill="#8c8c8c"><rect x="-1.5" y="-6.6" width="3" height="13.2" transform="rotate(0)"/><rect x="-1.5" y="-6.6" width="3" height="13.2" transform="rotate(45)"/><rect x="-1.5" y="-6.6" width="3" height="13.2" transform="rotate(90)"/><rect x="-1.5" y="-6.6" width="3" height="13.2" transform="rotate(135)"/><circle r="4.6"/></g><circle cx="7" cy="7" r="1.9" fill="#eee"/></svg>
<svg style="left:42px;top:580px;" width="12" height="15" viewBox="0 0 12 15"><defs><linearGradient id="lk" x1="0" y1="0" x2="0" y2="1"><stop offset="0" stop-color="#ffe68a"/><stop offset="1" stop-color="#f2b232"/></linearGradient></defs><path d="M2.1 6.2V3.6Q2.1 0.9 6 0.9Q9.9 0.9 9.9 3.6V6.2" stroke="#8d9096" stroke-width="1.7" fill="none"/><rect x="0.5" y="6" width="11" height="8.6" rx="1" fill="url(#lk)" stroke="#c27a12" stroke-width="1"/><path d="M2 8.3H4M2 10.3H4M2 12.3H4M8 8.3H10M8 10.3H10M8 12.3H10" stroke="#d9951e" stroke-width="0.8"/><rect x="5.2" y="8.4" width="1.6" height="3.2" fill="#3a2a10"/></svg>
<svg style="left:58px;top:580px;" width="15" height="16" viewBox="0 0 15 16"><circle cx="10.2" cy="4.3" r="3.7" fill="#e0e0e0" stroke="#8a8a8a" stroke-width="1"/><path d="M14.6 2.3L11 3.8V5L14.6 6.5" fill="#eeeeee" stroke="#8a8a8a" stroke-width="0.9" stroke-linejoin="round"/><path d="M1.8 13.4L7.6 7.6" stroke="#2c8ed8" stroke-width="3.8" stroke-linecap="round"/><path d="M2.6 12.4L7 8" stroke="#a6d8f8" stroke-width="0.9" stroke-dasharray="1.1 0.7"/></svg>
<svg style="left:385px;top:580px;" width="17" height="16" viewBox="0 0 17 16"><path d="M0.2 8.3C1 4.6 4 3.1 9 2.8V0.3L13.3 3.8L9 7.3V5.1C5.5 5.3 2.6 6.3 0.2 8.3Z" fill="#62b860" stroke="#3c9a3c" stroke-width="0.5"/><path d="M16 7.7C15.2 11.4 12.2 12.9 7.2 13.2V15.7L2.9 12.2L7.2 8.7V10.9C10.7 10.7 13.6 9.7 16 7.7Z" fill="#62b860" stroke="#3c9a3c" stroke-width="0.5"/></svg>
<svg style="left:418px;top:581px;" width="14" height="14" viewBox="0 0 14 14"><circle cx="5.5" cy="5.5" r="4.8" fill="#c5dcf4" stroke="#8bb7e8" stroke-width="1.2"/><circle cx="5" cy="5" r="2.8" fill="#dbe9f8"/><path d="M9 9L12.5 12.5" stroke="#b86c2c" stroke-width="2.6" stroke-linecap="round"/></svg>
<svg style="left:638px;top:274px" width="14" height="13" viewBox="0 0 14 13"><path d="M2.8 6.9L5.8 9.9L11.4 3.6" stroke="#3e8c2e" stroke-width="4" fill="none" stroke-linejoin="round" stroke-linecap="round"/><path d="M2.8 6.9L5.8 9.9L11.4 3.6" stroke="#66bb55" stroke-width="2.4" fill="none" stroke-linejoin="round" stroke-linecap="round"/></svg>
<svg style="left:638px;top:298px" width="14" height="13" viewBox="0 0 14 13"><path d="M2.8 6.9L5.8 9.9L11.4 3.6" stroke="#3e8c2e" stroke-width="4" fill="none" stroke-linejoin="round" stroke-linecap="round"/><path d="M2.8 6.9L5.8 9.9L11.4 3.6" stroke="#66bb55" stroke-width="2.4" fill="none" stroke-linejoin="round" stroke-linecap="round"/></svg>
<svg style="left:638px;top:322px" width="14" height="13" viewBox="0 0 14 13"><path d="M2.8 6.9L5.8 9.9L11.4 3.6" stroke="#3e8c2e" stroke-width="4" fill="none" stroke-linejoin="round" stroke-linecap="round"/><path d="M2.8 6.9L5.8 9.9L11.4 3.6" stroke="#66bb55" stroke-width="2.4" fill="none" stroke-linejoin="round" stroke-linecap="round"/></svg>
<svg style="left:700px;top:698px;" width="16" height="16" viewBox="0 0 16 16"><defs><linearGradient id="g700" x1="0" y1="0" x2="0" y2="1"><stop offset="0" stop-color="#5676b8"/><stop offset="1" stop-color="#2f4f98"/></linearGradient></defs><rect x="0.5" y="0.5" width="15" height="15" rx="1.5" fill="url(#g700)"/><rect x="3.5" y="2.5" width="9" height="1.4" fill="#fff"/><rect x="3.5" y="9" width="9" height="6.5" fill="#fff"/><rect x="5" y="10.5" width="1.5" height="5" fill="#2f4f98"/></svg>
<svg style="left:768px;top:698px;" width="16" height="16" viewBox="0 0 16 16"><defs><linearGradient id="g768" x1="0" y1="0" x2="0" y2="1"><stop offset="0" stop-color="#8fd0f4"/><stop offset="1" stop-color="#3ea0dc"/></linearGradient></defs><rect x="0.5" y="0.5" width="15" height="15" rx="1.5" fill="url(#g768)"/><rect x="3.5" y="2.5" width="9" height="1.4" fill="#fff"/><rect x="3.5" y="9" width="9" height="6.5" fill="#fff"/><rect x="5" y="10.5" width="1.5" height="5" fill="#3ea0dc"/></svg>
<svg style="left:801px;top:698px;" width="16" height="16" viewBox="0 0 16 16"><defs><linearGradient id="g801" x1="0" y1="0" x2="0" y2="1"><stop offset="0" stop-color="#5676b8"/><stop offset="1" stop-color="#2f4f98"/></linearGradient></defs><rect x="0.5" y="0.5" width="15" height="15" rx="1.5" fill="url(#g801)"/><rect x="3.5" y="2.5" width="9" height="1.4" fill="#fff"/><rect x="3.5" y="9" width="9" height="6.5" fill="#fff"/><rect x="5" y="10.5" width="1.5" height="5" fill="#2f4f98"/></svg>
<svg style="left:775px;top:695px;" width="12" height="12" viewBox="0 0 12 12"><path d="M6 1V9M2 5H10" stroke="#eef" stroke-width="4"/><path d="M6 1.5V8.5M2.5 5H9.5" stroke="#3aa0e0" stroke-width="2.2"/></svg>
<svg style="left:810px;top:695px;" width="10" height="10" viewBox="0 0 10 10"><path d="M2 2L8 8M8 2L2 8" stroke="#fff" stroke-width="3.4"/><path d="M2 2L8 8M8 2L2 8" stroke="#e8302a" stroke-width="1.8"/></svg>
<svg style="left:839px;top:698px;" width="16" height="16" viewBox="0 0 16 16"><path d="M1 7C1.5 3.5 4 2.5 9.5 2.6V0.3L14 3.8L9.5 7.3V5C5.5 4.9 3 5.5 1 7Z" fill="#4e3578"/><path d="M15 8.6C14.5 12.1 12 13.1 6.5 13V15.3L2 11.8L6.5 8.3V10.6C10.5 10.7 13 10.1 15 8.6Z" fill="#9878bc"/></svg>
<svg style="left:922px;top:698px;" width="17" height="16" viewBox="0 0 17 16"><defs><linearGradient id="pa" x1="0" x2="1"><stop offset="0" stop-color="#2a7a2a"/><stop offset="1" stop-color="#5cbf4c"/></linearGradient></defs><path d="M0.5 8L8 0.8V4.5H16.5V11.5H8V15.2Z" fill="url(#pa)" stroke="#fff" stroke-width="0.8"/></svg>
<svg style="left:1030px;top:698px;" width="17" height="16" viewBox="0 0 17 16"><defs><linearGradient id="na" x1="0" x2="1"><stop offset="0" stop-color="#5cbf4c"/><stop offset="1" stop-color="#1f6a1f"/></linearGradient></defs><path d="M16.5 8L9 0.8V4.5H0.5V11.5H9V15.2Z" fill="url(#na)" stroke="#fff" stroke-width="0.8"/></svg>
<svg style="left:1058px;top:710px;" width="14" height="14" viewBox="0 0 14 14"><path d="M1.5 12.5L12.5 1.5M5.5 12.5L12.5 5.5M9.5 12.5L12.5 9.5" stroke="#222" stroke-width="1.1"/></svg>
</body></html>
